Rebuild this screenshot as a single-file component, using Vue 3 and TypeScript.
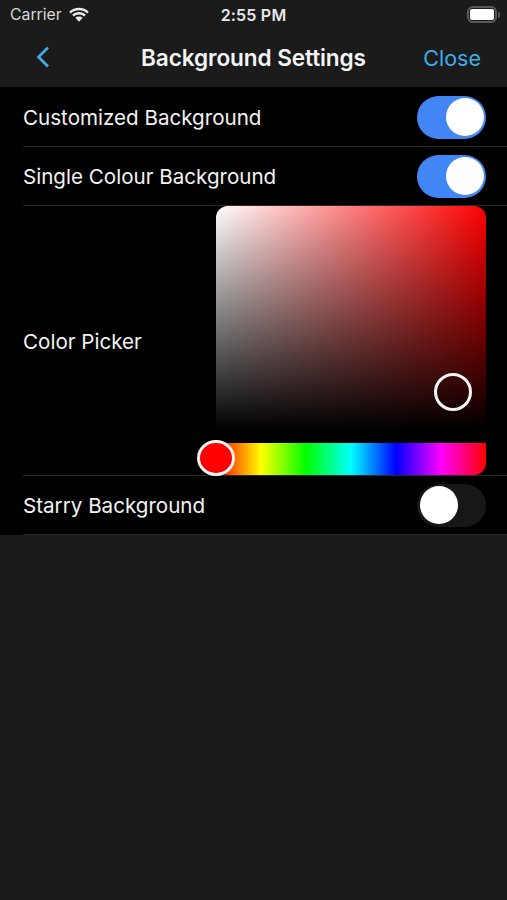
<script setup lang="ts">
const hueStops = 'linear-gradient(90deg,#f00 0%,#ff0 16.67%,#0f0 33.33%,#0ff 50%,#00f 66.67%,#f0f 83.33%,#f00 100%)'
</script>

<template>
  <div class="screen">
    <div class="status">
      <div class="status-left">
        <span class="carrier">Carrier</span>
        <svg class="wifi" width="22" height="16" viewBox="0 0 22 16">
          <path d="M11 3.200c3.200 0 6 1.200 8.200 3.200l1.600-1.700C18.200 2.300 14.800.8 11 .8S3.800 2.300 1.200 4.700l1.600 1.700C5 4.400 7.800 3.200 11 3.200z" fill="#e8e8e8"/>
          <path d="M11 7.500c2 0 3.800.8 5.200 2l1.600-1.700C16 6.100 13.600 5.100 11 5.100S6 6.100 4.200 7.800l1.600 1.700c1.400-1.200 3.200-2 5.200-2z" fill="#e8e8e8"/>
          <path d="M11 9.400c-1.400 0-2.700.5-3.700 1.400L11 14.800l3.700-4c-1-.9-2.300-1.400-3.700-1.400z" fill="#e8e8e8"/>
        </svg>
      </div>
      <span class="time">2:55 PM</span>
      <div class="battery"><div class="battery-fill"></div><div class="battery-cap"></div></div>
    </div>
    <div class="nav">
      <svg class="back" width="16" height="24" viewBox="0 0 16 24">
        <path d="M13 2.500 3.500 12l9.500 9.500" fill="none" stroke="#40aee8" stroke-width="2.600"/>
      </svg>
      <span class="title">Background Settings</span>
      <span class="close">Close</span>
    </div>

    <div class="list">
      <div class="row">
        <span class="label">Customized Background</span>
        <div class="toggle on"><div class="knob"></div></div>
      </div>
      <div class="row">
        <span class="label">Single Colour Background</span>
        <div class="toggle on"><div class="knob"></div></div>
      </div>
      <div class="row picker-row">
        <span class="label">Color Picker</span>
        <div class="picker">
          <div class="sb">
            <div class="sb-white"></div>
            <div class="sb-black"></div>
            <div class="sb-thumb"></div>
          </div>
          <div class="hue" :style="{ background: hueStops }">
            <div class="hue-thumb"></div>
          </div>
        </div>
      </div>
      <div class="row">
        <span class="label">Starry Background</span>
        <div class="toggle off"><div class="knob"></div></div>
      </div>
    </div>
  </div>
</template>

<style>
html, body { margin: 0; background: #1b1b1b; }
</style>

<style scoped>
.screen {
  width: 507px;
  height: 900px;
  background: #1b1b1b;
  font-family: Inter, "Liberation Sans", sans-serif;
  color: #fff;
  overflow: hidden;
}
.status {
  height: 29px;
  padding: 0 10px 1px 10px;
  display: grid;
  grid-template-columns: 1fr auto 1fr;
  align-items: center;
}
.status-left { display: flex; align-items: center; gap: 6px; }
.carrier { font-size: 15.800px; color: #d8d8d8; }
.wifi { margin-top: 1px; }
.time { font-size: 16px; font-weight: 600; color: #e8e8e8; letter-spacing: .2px; }
.battery {
  justify-self: end;
  position: relative;
  width: 30px;
  height: 17px;
  box-sizing: border-box;
  border: 2px solid #5a5a5a;
  border-radius: 6px;
  padding: 1px;
  margin-right: 0;
}
.battery-fill { width: 100%; height: 100%; background: #fff; border-radius: 2px; }
.battery-cap {
  position: absolute;
  right: -5px;
  top: 3.500px;
  width: 2px;
  height: 6px;
  background: #555;
  border-radius: 0 2px 2px 0;
}
.nav {
  height: 55px;
  padding: 0 26px 2px 35px;
  display: grid;
  grid-template-columns: 1fr auto 1fr;
  align-items: center;
}
.back { margin-bottom: 1px; }
.title { font-size: 22.600px; font-weight: 600; color: #f4f4f4; margin-left: -9px; letter-spacing: -.1px; }
.close { justify-self: end; font-size: 21.500px; color: #40aee8; }
.list { background: #000; padding-top: 1px; }
.row {
  height: 59px;
  margin-left: 23px;
  padding-right: 21px;
  display: flex;
  align-items: center;
  justify-content: space-between;
  border-bottom: 1px solid #2a2a2a;
  box-sizing: border-box;
}
.label { font-size: 20.600px; color: #f2f2f2; margin-top: 1px; }
.toggle {
  width: 69px;
  height: 43px;
  border-radius: 22px;
  padding: 2.500px;
  box-sizing: border-box;
  display: flex;
}
.toggle.on { background: #4285f4; justify-content: flex-end; }
.toggle.off { background: #171717; justify-content: flex-start; }
.knob { width: 38px; height: 38px; border-radius: 50%; background: #fff; }
.picker-row { height: 270px; }
.picker {
  width: 270px;
  height: 269px;
  display: flex;
  flex-direction: column;
}
.sb {
  position: relative;
  height: 224px;
  margin-bottom: 13px;
  background: #f00;
  border-radius: 12px 12px 0 0;
  overflow: hidden;
}
.sb-white, .sb-black { position: absolute; inset: 0; }
.sb-white { background: linear-gradient(90deg, #fff, rgba(255,255,255,0)); }
.sb-black { background: linear-gradient(180deg, rgba(0,0,0,0), #000); }
.sb-thumb {
  position: absolute;
  left: 218px;
  top: 167px;
  width: 38px;
  height: 38px;
  box-sizing: border-box;
  border: 3px solid #f4f4f4;
  border-radius: 50%;
}
.hue {
  position: relative;
  height: 32px;
  border-radius: 0 0 12px 12px;
}
.hue-thumb {
  position: absolute;
  left: -19px;
  top: -3px;
  width: 38px;
  height: 36px;
  box-sizing: border-box;
  background: #f00;
  border: 3.500px solid #f4f4f4;
  border-radius: 50%;
}
</style>
